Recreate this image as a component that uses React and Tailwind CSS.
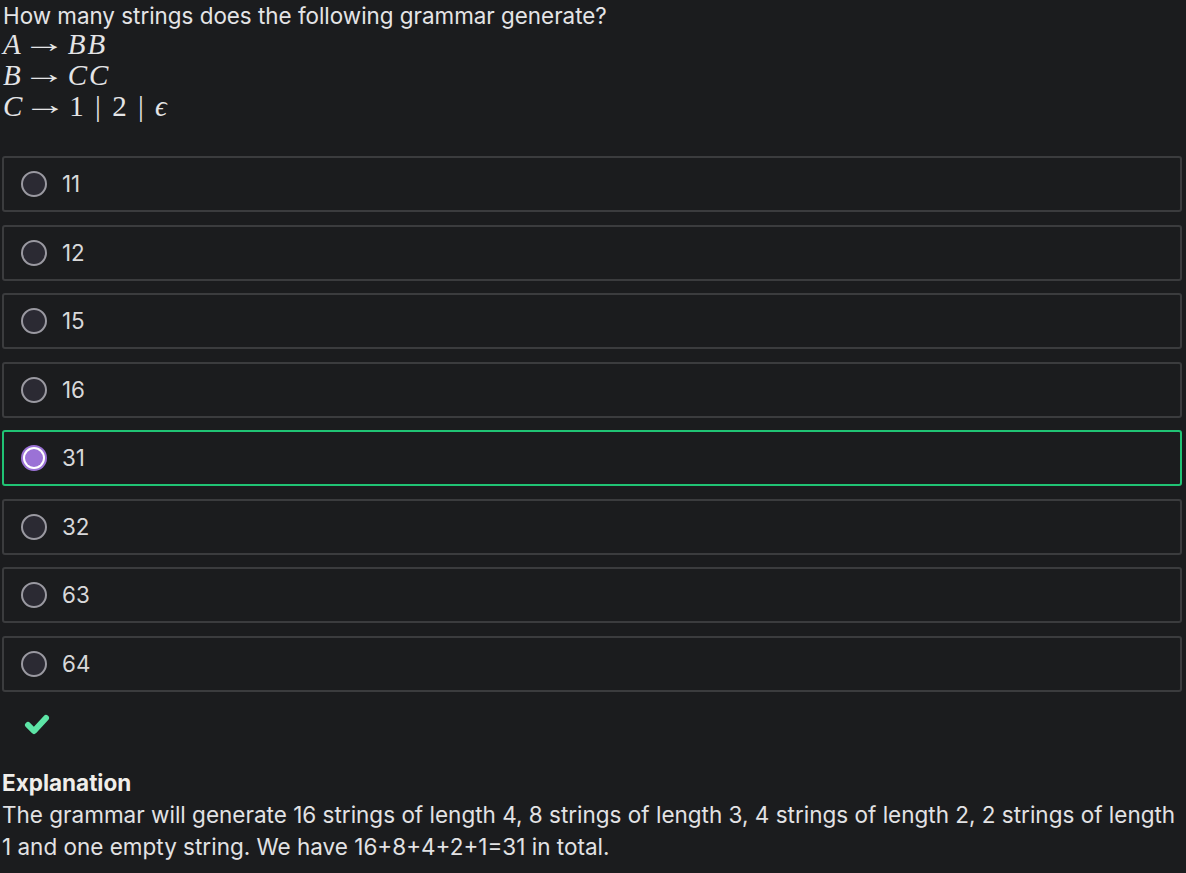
import React from "react";

const options = ["11", "12", "15", "16", "31", "32", "63", "64"];
const selected = "31";

const mathFont = { fontFamily: '"Liberation Serif", "DejaVu Serif", serif' };

function Arrow() {
  return <span className="inline-block mx-[7px] scale-x-[1.5] -translate-y-[2px]">→</span>;
}

function Radio({ checked }) {
  if (checked) {
    return (
      <div className="w-[26px] h-[26px] rounded-full bg-[#9b72d6] flex items-center justify-center">
        <div className="w-[22px] h-[22px] rounded-full bg-white flex items-center justify-center">
          <div className="w-[18px] h-[18px] rounded-full bg-[#9b72d6]" />
        </div>
      </div>
    );
  }
  return <div className="w-[26px] h-[26px] rounded-full border-2 border-[#9a99a1] bg-[#2b2a33]" />;
}

export default function App() {
  return (
    <div
      className="min-h-[873px] bg-[#1b1c1e] text-[#e4e4e6] px-[2px] overflow-hidden"
      style={{ fontFamily: 'Inter, "Noto Sans", sans-serif' }}
    >
      <p className="text-[22.4px] leading-[30px] pt-[1px] pl-[1px]">How many strings does the following grammar generate?</p>
      <div className="text-[29px] leading-[31px] pl-[1px] -mt-[2px] tracking-[2px]" style={mathFont}>
        <div>
          <i>A</i>
          <Arrow />
          <i>BB</i>
        </div>
        <div>
          <i>B</i>
          <Arrow />
          <i>CC</i>
        </div>
        <div>
          <i>C</i>
          <Arrow />1 <span className="font-light">|</span> 2 <span className="font-light">|</span> <i>ϵ</i>
        </div>
      </div>

      <div className="mt-[34px] flex flex-col gap-[12.5px] pr-[2px]">
        {options.map((o) => (
          <div
            key={o}
            className={`h-[56px] rounded-[3px] border-2 flex items-center pl-[17px] ${
              o === selected ? "border-[#20c374]" : "border-[#3b3c3e]"
            }`}
          >
            <Radio checked={o === selected} />
            <span className="ml-[15px] text-[22.4px] text-[#d8d8da]">{o}</span>
          </div>
        ))}
      </div>

      <div className="mt-[21px] pl-[22px] h-[22px]">
        <svg width="26" height="22" viewBox="0 0 26 22">
          <path d="M4 12 L10 18 L22 5" fill="none" stroke="#5de4a6" strokeWidth="6" strokeLinecap="round" strokeLinejoin="round" />
        </svg>
      </div>

      <div className="mt-[32px] text-[22.5px] leading-[32px]">
        <div className="font-bold text-[#f0eeea]">Explanation</div>
        <p className="text-[#e2e2e4]">
          The grammar will generate 16 strings of length 4, 8 strings of length 3, 4 strings of length 2, 2 strings of length 1 and one empty string. We have 16+8+4+2+1=31 in total.
        </p>
      </div>
    </div>
  );
}
